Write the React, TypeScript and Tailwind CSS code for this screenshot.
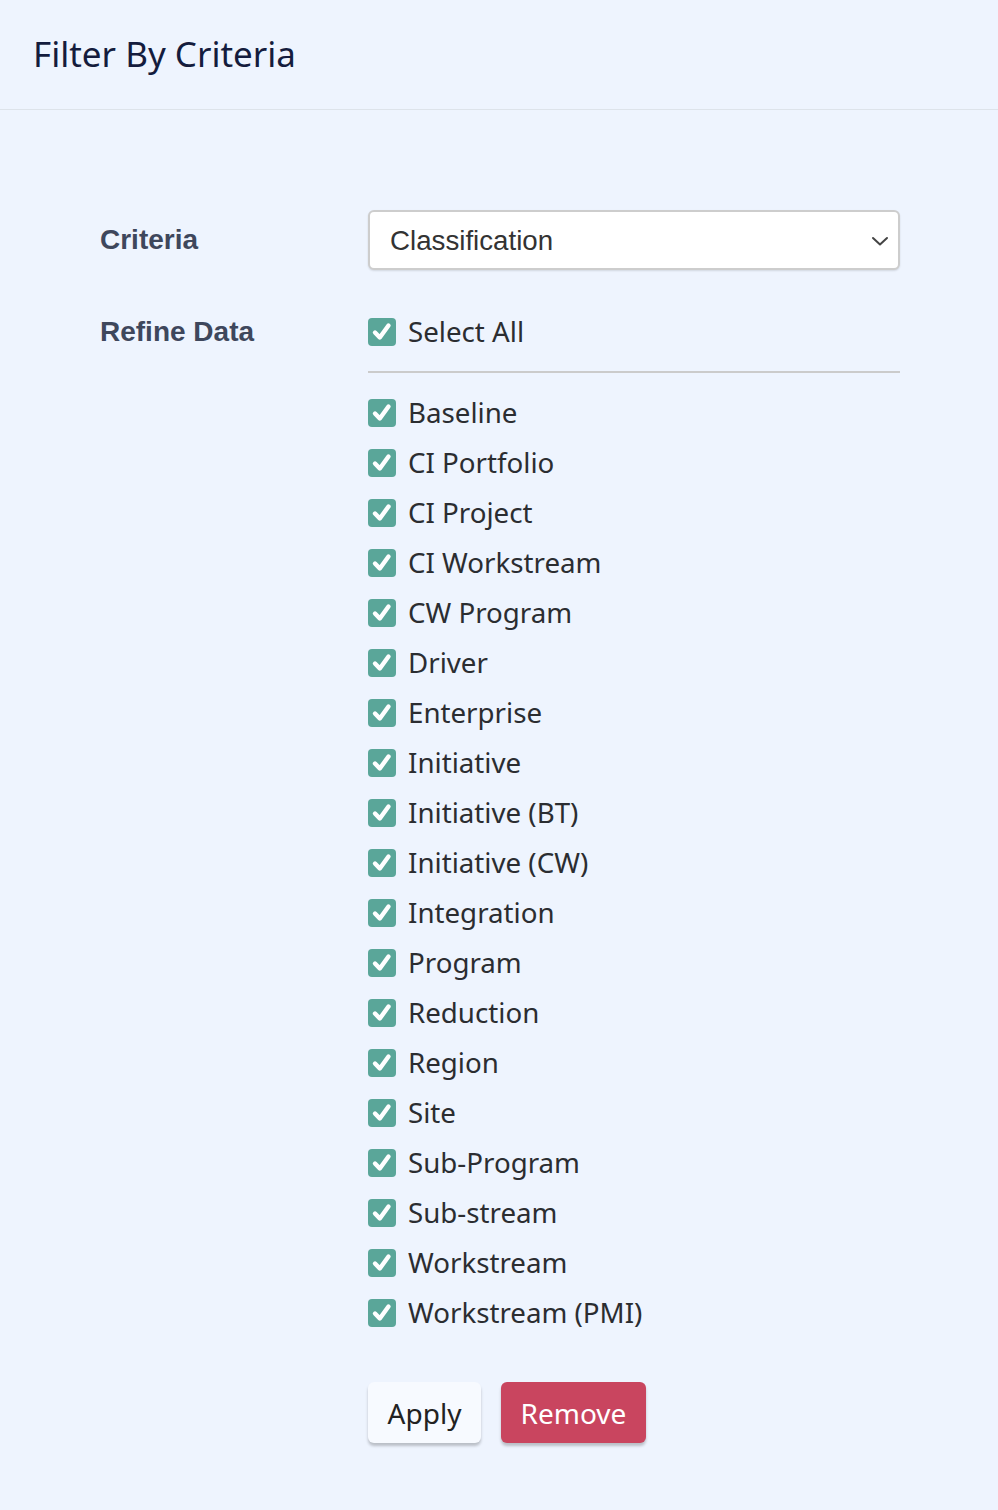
import React from "react";

const items = [
  "Baseline",
  "CI Portfolio",
  "CI Project",
  "CI Workstream",
  "CW Program",
  "Driver",
  "Enterprise",
  "Initiative",
  "Initiative (BT)",
  "Initiative (CW)",
  "Integration",
  "Program",
  "Reduction",
  "Region",
  "Site",
  "Sub-Program",
  "Sub-stream",
  "Workstream",
  "Workstream (PMI)",
];

function Check() {
  return (
    <span className="flex h-[28px] w-[28px] shrink-0 items-center justify-center rounded-[4px] bg-[#5aa699]">
      <svg width="24" height="24" viewBox="0 0 24 24" fill="none">
        <path d="M5 12.5 L9.8 17.5 L18.5 5.5" stroke="white" strokeWidth="4.4" strokeLinecap="round" strokeLinejoin="round" />
      </svg>
    </span>
  );
}

function CheckRow({ label }: { label: string }) {
  return (
    <label className="flex h-[50px] items-center gap-[12px] text-[27.7px] text-[#2b2d31]">
      <Check />
      <span>{label}</span>
    </label>
  );
}

export default function App() {
  return (
    <div className="min-h-[1510px] bg-[#eef4fe] font-['Noto_Sans',sans-serif]">
      <header className="flex h-[110px] items-center border-b border-[#dde3ea] px-[33px]">
        <h1 className="text-[35px] text-[#141c3d]">Filter By Criteria</h1>
      </header>

      <div className="grid grid-cols-[268px_532px] px-[100px] pt-[100px]">
        <div className="flex h-[60px] items-center font-['Liberation_Sans',sans-serif] text-[28px] font-bold text-[#3e475c]">
          Criteria
        </div>
        <div className="flex h-[60px] items-center justify-between rounded-[6px] border-2 border-[#cdcdcd] bg-white pl-[20px] pr-[8px] pt-[2px] font-['Liberation_Sans',sans-serif] text-[27.7px] text-[#333] shadow-[0_1px_2px_rgba(0,0,0,0.12)]">
          <span>Classification</span>
          <svg width="20" height="20" viewBox="0 0 20 20" fill="none">
            <path d="M3 7 L10 13.5 L17 7" stroke="#444" strokeWidth="2" strokeLinecap="round" strokeLinejoin="round" />
          </svg>
        </div>

        <div className="mt-[37px] flex h-[50px] items-center font-['Liberation_Sans',sans-serif] text-[28px] font-bold text-[#3e475c]">
          Refine Data
        </div>
        <div className="pt-[37px]">
          <div className="border-b-2 border-[#cbcbcb] pb-[14px]">
            <CheckRow label="Select All" />
          </div>
          <div className="pt-[15px]">
            {items.map((it) => (
              <CheckRow key={it} label={it} />
            ))}
          </div>
          <div className="flex gap-[20px] pt-[44px] text-[28px]">
            <button className="h-[61px] w-[113px] rounded-[6px] bg-[#f7faff] text-[#222] shadow-[0_3px_3px_rgba(0,0,0,0.22)]">
              Apply
            </button>
            <button className="h-[61px] w-[145px] rounded-[6px] bg-[#c9455f] text-white shadow-[0_3px_3px_rgba(0,0,0,0.22)]">
              Remove
            </button>
          </div>
        </div>
      </div>
    </div>
  );
}
